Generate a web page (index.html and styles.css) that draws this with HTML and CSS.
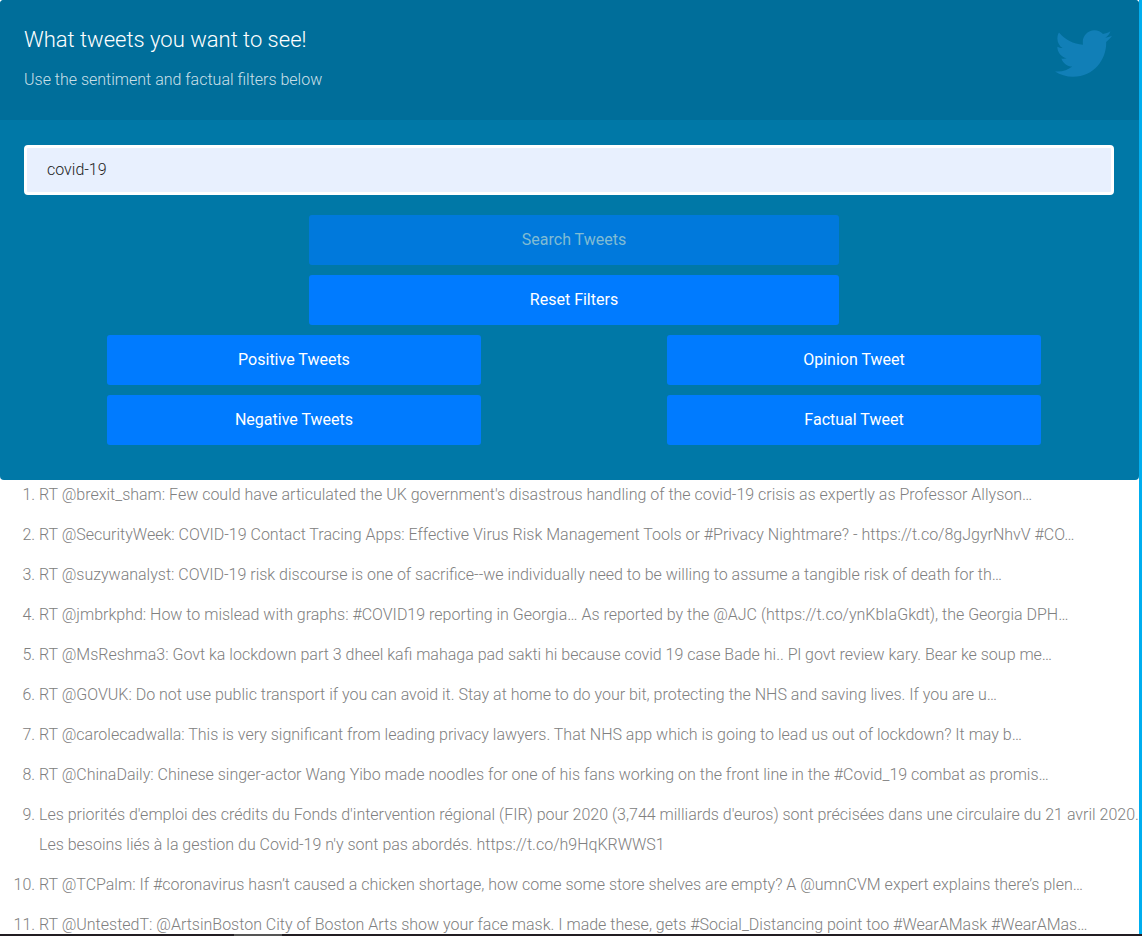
FILE: index.html
```html
<!DOCTYPE html>
<html lang="en">
<head>
<meta charset="utf-8">
<title>Tweet filters</title>
<link rel="stylesheet" href="styles.css">
</head>
<body>
<main class="page">
  <section class="panel">
    <header class="panel-header">
      <div>
        <h1 class="title">What tweets you want to see!</h1>
        <p class="subtitle">Use the sentiment and factual filters below</p>
      </div>
      <svg class="bird" viewBox="0 0 512 512" aria-hidden="true"><path fill="currentColor" d="M459.37 151.716c.325 4.548.325 9.097.325 13.645 0 138.72-105.583 298.558-298.558 298.558-59.452 0-114.68-17.219-161.137-47.106 8.447.974 16.568 1.299 25.34 1.299 49.055 0 94.213-16.568 130.274-44.832-46.132-.975-84.792-31.188-98.112-72.772 6.498.974 12.995 1.624 19.818 1.624 9.421 0 18.843-1.3 27.614-3.573-48.081-9.747-84.143-51.98-84.143-102.985v-1.299c13.969 7.797 30.214 12.67 47.431 13.319-28.264-18.843-46.781-51.005-46.781-87.391 0-19.492 5.197-37.36 14.294-52.954 51.655 63.675 129.3 105.258 216.365 109.807-1.624-7.797-2.599-15.918-2.599-24.04 0-57.828 46.782-104.934 104.934-104.934 30.213 0 57.502 12.67 76.67 33.137 23.715-4.548 46.456-13.32 66.599-25.34-7.798 24.366-24.366 44.833-46.132 57.827 21.117-2.273 41.584-8.122 60.426-16.243-14.292 20.791-32.161 39.308-52.628 54.253z"/></svg>
    </header>
    <form class="panel-body">
      <input class="search" type="text" value="covid-19" aria-label="Search term">
      <div class="actions">
        <button class="btn btn-wide" type="button" disabled>Search Tweets</button>
        <button class="btn btn-wide" type="button">Reset Filters</button>
        <button class="btn" type="button">Positive Tweets</button>
        <button class="btn" type="button">Opinion Tweet</button>
        <button class="btn" type="button">Negative Tweets</button>
        <button class="btn" type="button">Factual Tweet</button>
      </div>
    </form>
  </section>
  <ol class="tweets">
    <li>RT @brexit_sham: Few could have articulated the UK government's disastrous handling of the covid-19 crisis as expertly as Professor Allyson…</li>
    <li>RT @SecurityWeek: COVID-19 Contact Tracing Apps: Effective Virus Risk Management Tools or #Privacy Nightmare? - https://t.co/8gJgyrNhvV #CO…</li>
    <li>RT @suzywanalyst: COVID-19 risk discourse is one of sacrifice--we individually need to be willing to assume a tangible risk of death for th…</li>
    <li>RT @jmbrkphd: How to mislead with graphs: #COVID19 reporting in Georgia… As reported by the @AJC (https://t.co/ynKbIaGkdt), the Georgia DPH…</li>
    <li>RT @MsReshma3: Govt ka lockdown part 3 dheel kafi mahaga pad sakti hi because covid 19 case Bade hi.. Pl govt review kary. Bear ke soup me…</li>
    <li>RT @GOVUK: Do not use public transport if you can avoid it. Stay at home to do your bit, protecting the NHS and saving lives. If you are u…</li>
    <li>RT @carolecadwalla: This is very significant from leading privacy lawyers. That NHS app which is going to lead us out of lockdown? It may b…</li>
    <li>RT @ChinaDaily: Chinese singer-actor Wang Yibo made noodles for one of his fans working on the front line in the #Covid_19 combat as promis…</li>
    <li>Les priorités d'emploi des crédits du Fonds d'intervention régional (FIR) pour 2020 (3,744 milliards d'euros) sont précisées dans une circulaire du 21 avril 2020. Les besoins liés à la gestion du Covid-19 n'y sont pas abordés. https://t.co/h9HqKRWWS1</li>
    <li>RT @TCPalm: If #coronavirus hasn’t caused a chicken shortage, how come some store shelves are empty? A @umnCVM expert explains there’s plen…</li>
    <li>RT @UntestedT: @ArtsinBoston City of Boston Arts show your face mask. I made these, gets #Social_Distancing point too #WearAMask #WearAMas…</li>
  </ol>
</main>
<div class="taskbar"><span class="taskbar-item"></span></div>
</body>
</html>
```
FILE: styles.css
```css
* {
  box-sizing: border-box;
}

body {
  display: flex;
  flex-direction: column;
  height: 100vh;
  margin: 0;
  overflow: hidden;
  background: #fff;
  font: 300 16px/30px Roboto, sans-serif;
  color: #808080;
}

.page {
  flex: 1;
  min-height: 0;
  overflow: hidden;
  border-right: 3px solid #00aeef;
}

.panel {
  overflow: hidden;
  border-radius: 4px;
  background: #0078a7;
}

.panel-header {
  display: flex;
  justify-content: space-between;
  padding: 25px 27px 25px 24px;
  background: #006e9a;
}

.title {
  margin: 0 0 10px;
  font-size: 22px;
  font-weight: 300;
  line-height: 30px;
  color: #fff;
}

.subtitle {
  margin: 0;
  font-weight: 300;
  color: rgba(255, 255, 255, 0.8);
}

.bird {
  width: 57px;
  height: 57px;
  color: #117fb7;
}

.panel-body {
  padding: 25px 25px 35px 24px;
}

.search {
  display: block;
  width: 100%;
  height: 50px;
  padding: 0 20px 2px;
  border: 3px solid #fff;
  border-radius: 4px;
  background: #e8f0fe;
  font: inherit;
  color: #222;
}

.actions {
  display: grid;
  grid-template-columns: 1fr 1fr;
  gap: 10px 0;
  justify-items: center;
  margin: 20px -20px 0 -10px;
}

.btn {
  width: 374px;
  max-width: 90%;
  height: 50px;
  padding: 0;
  border: 0;
  border-radius: 3px;
  background: #007bff;
  font: inherit;
  font-weight: 400;
  color: #fff;
}

.btn-wide {
  grid-column: 1 / -1;
  width: 530px;
}

.btn:disabled {
  background: #0079dc;
  color: #80bcd3;
}

.tweets {
  margin: 0;
  padding: 0 0 0 39px;
}

.tweets li {
  margin-bottom: 10px;
}

.taskbar {
  height: 2px;
  padding-left: 234px;
  background: #211d22;
}

.taskbar-item {
  display: block;
  width: 48px;
  height: 100%;
  background: #555;
}
```
